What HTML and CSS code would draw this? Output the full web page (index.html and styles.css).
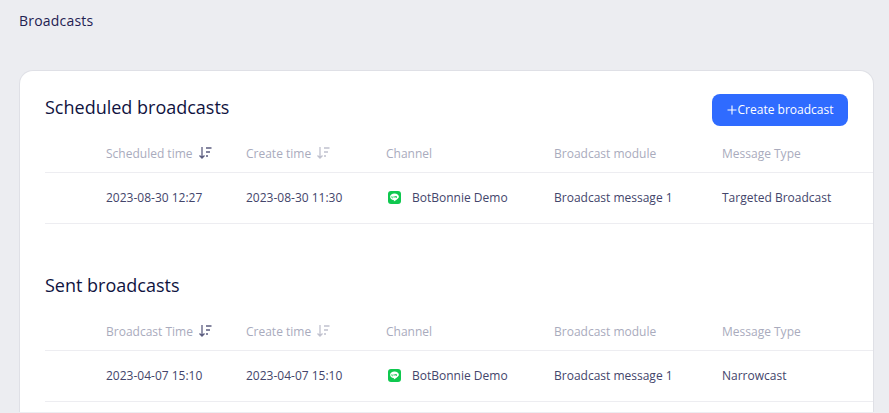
FILE: index.html
```html
<!DOCTYPE html>
<html lang="en">
<head>
<meta charset="utf-8">
<title>Broadcasts</title>
<link rel="stylesheet" href="styles.css">
</head>
<body>
<div class="page">
  <div class="crumb">Broadcasts</div>
  <main class="card">
    <section class="section">
      <div class="head">
        <h2 class="title">Scheduled broadcasts</h2>
        <button class="create"><svg class="plus" viewBox="0 0 10 10"><path d="M5 .5v9M.5 5h9"/></svg>Create broadcast</button>
      </div>
      <div class="row row-head">
        <div class="cell">Scheduled time <svg class="sort sort-dark" viewBox="0 0 14 14"><path d="M4 1v11M1.5 9.500L4 12l2.500-2.500M8 2h5.500M8 6h4M8 10h2"/></svg></div>
        <div class="cell">Create time <svg class="sort" viewBox="0 0 14 14"><path d="M4 1v11M1.500 9.500L4 12l2.500-2.500M8 2h5.500M8 6h4M8 10h2"/></svg></div>
        <div class="cell">Channel</div>
        <div class="cell">Broadcast module</div>
        <div class="cell">Message Type</div>
      </div>
      <div class="row row-body">
        <div class="cell">2023-08-30 12:27</div>
        <div class="cell">2023-08-30 11:30</div>
        <div class="cell channel"><svg class="line" viewBox="0 0 13 13"><rect width="13" height="13" rx="3" fill="#0fc84f"/><path d="M6.500 2.400c-2.500 0-4.400 1.500-4.400 3.400 0 1.700 1.500 3 3.500 3.300.4.100.3.400.2 1 0 .2.200.3.500.100 1.200-.7 4.600-2.600 4.600-4.400 0-1.900-1.900-3.400-4.400-3.400z" fill="#fff"/><path d="M3.900 5v1.800h1.200M6 5v1.800M7.100 6.800V5l1.400 1.800V5" stroke="#0fc84f" stroke-width=".7" fill="none"/></svg><span>BotBonnie Demo</span></div>
        <div class="cell">Broadcast message 1</div>
        <div class="cell">Targeted Broadcast</div>
      </div>
    </section>
    <section class="section section-sent">
      <div class="head head-sent">
        <h2 class="title">Sent broadcasts</h2>
      </div>
      <div class="row row-head">
        <div class="cell">Broadcast Time <svg class="sort sort-dark" viewBox="0 0 14 14"><path d="M4 1v11M1.500 9.500L4 12l2.500-2.500M8 2h5.500M8 6h4M8 10h2"/></svg></div>
        <div class="cell">Create time <svg class="sort" viewBox="0 0 14 14"><path d="M4 1v11M1.500 9.500L4 12l2.500-2.500M8 2h5.500M8 6h4M8 10h2"/></svg></div>
        <div class="cell">Channel</div>
        <div class="cell">Broadcast module</div>
        <div class="cell">Message Type</div>
      </div>
      <div class="row row-body">
        <div class="cell">2023-04-07 15:10</div>
        <div class="cell">2023-04-07 15:10</div>
        <div class="cell channel"><svg class="line" viewBox="0 0 13 13"><rect width="13" height="13" rx="3" fill="#0fc84f"/><path d="M6.500 2.400c-2.500 0-4.400 1.500-4.400 3.400 0 1.700 1.500 3 3.500 3.300.4.100.3.400.2 1 0 .2.200.3.500.100 1.200-.7 4.600-2.600 4.600-4.400 0-1.900-1.900-3.400-4.400-3.400z" fill="#fff"/><path d="M3.900 5v1.800h1.200M6 5v1.800M7.100 6.800V5l1.400 1.800V5" stroke="#0fc84f" stroke-width=".7" fill="none"/></svg><span>BotBonnie Demo</span></div>
        <div class="cell">Broadcast message 1</div>
        <div class="cell">Narrowcast</div>
      </div>
    </section>
  </main>
</div>
</body>
</html>
```

FILE: styles.css
```css
* { box-sizing: border-box; }
html, body { margin: 0; height: 100%; overflow: hidden; }
body {
  background: #ecedf1;
  font-family: "Open Sans", "Noto Sans", sans-serif;
  color: #14163f;
}
.page { height: 413px; overflow: hidden; padding: 11px 15px 0 19px; }
.crumb { font-size: 14px; line-height: 19px; color: #1f2251; letter-spacing: .2px; }
.card {
  margin-top: 40px;
  padding: 0 0 0 25px;
  height: 342px;
  background: #fff;
  border: 1px solid #dfe0e6;
  border-bottom: 0;
  border-radius: 14px 14px 0 0;
}
.head {
  display: flex;
  justify-content: space-between;
  align-items: flex-start;
  height: 63px;
  padding: 23px 25px 0 0;
}
.head-sent { height: 40px; padding-top: 0; }
.section-sent { margin-top: 48px; }
.title { margin: 0; font-size: 18px; line-height: 26px; font-weight: 500; color: #10133f; }
.create {
  display: flex;
  align-items: center;
  justify-content: center;
  flex: none;
  gap: 1px;
  width: 136px;
  height: 32px;
  padding: 0;
  border: 0;
  border-radius: 8px;
  background: #2f6bff;
  color: #fff;
  font: 500 12px/16px "Open Sans", sans-serif;
}
.plus { width: 10px; height: 10px; fill: none; stroke: #fff; stroke-width: 1.100; }
.row {
  display: grid;
  grid-template-columns: 140px 140px 168px 168px 1fr;
  padding-left: 61px;
  border-bottom: 1px solid #ededf1;
  font-size: 12px;
  align-items: center;
}
.row-head { height: 39px; color: #a9abbd; }
.row-body { height: 51px; padding-bottom: 2px; color: #43456b; }
.cell { display: flex; align-items: center; white-space: pre; }
.sort { width: 14px; height: 14px; margin-left: 2px; fill: none; stroke: #c0c1ce; stroke-width: 1.300; }
.sort-dark { stroke: #5c5e80; }
.channel { gap: 11px; }
.line { width: 13px; height: 13px; margin-left: 2px; }
```
